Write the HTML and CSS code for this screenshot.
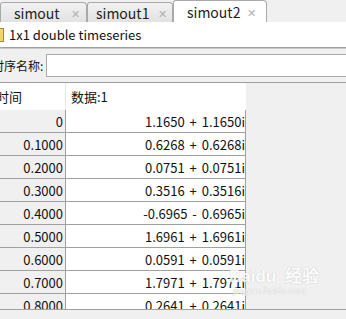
FILE: index.html
```html
<!DOCTYPE html>
<html lang="zh-CN">
<head>
  <meta charset="UTF-8" />
  <title>simout2</title>
  <link rel="stylesheet" href="styles.css">
</head>
<body>
  <div class="tabs">
    <div class="tab tab-1"><span>simout</span><span class="close">&#x2715;</span></div>
    <div class="tab tab-2"><span>simout1</span><span class="close">&#x2715;</span></div>
    <div class="tab tab-3 active"><span>simout2</span><span class="close">&#x2715;</span></div>
  </div>

  <div class="info">
    <span class="var-icon"></span>
    <span>1x1 double timeseries</span>
  </div>

  <div class="name-row">
    <span class="name-label">时序名称:</span>
    <input class="name-input" type="text">
  </div>

  <div class="panel">
    <div class="grid">
      <div class="head head-time">时间</div>
      <div class="head head-data">数据:1</div>

      <div class="cell time">0</div><div class="cell data">1.1650 + 1.1650i</div>
      <div class="cell time">0.1000</div><div class="cell data">0.6268 + 0.6268i</div>
      <div class="cell time">0.2000</div><div class="cell data">0.0751 + 0.0751i</div>
      <div class="cell time">0.3000</div><div class="cell data">0.3516 + 0.3516i</div>
      <div class="cell time">0.4000</div><div class="cell data">-0.6965 - 0.6965i</div>
      <div class="cell time">0.5000</div><div class="cell data">1.6961 + 1.6961i</div>
      <div class="cell time">0.6000</div><div class="cell data">0.0591 + 0.0591i</div>
      <div class="cell time">0.7000</div><div class="cell data">1.7971 + 1.7971i</div>
      <div class="cell time">0.8000</div><div class="cell data">0.2641 + 0.2641i</div>
    </div>
    <div class="watermark">
      <div class="wm-logo">Bai<span class="wm-du">du</span> 经验</div>
      <div class="wm-url">jingyan.baidu.com</div>
    </div>
  </div>
</body>
</html>
```

FILE: styles.css
```css
body {
  margin: 0;
  background: #f0f0f0;
  font-family: "Noto Sans CJK SC", "Open Sans", sans-serif;
  font-size: 13px;
  color: #111;
  width: 346px;
  height: 319px;
  overflow: hidden;
}
.tabs {
  display: flex;
  align-items: flex-end;
  height: 22px;
  background: #f0f0f0;
}
.tab {
  display: flex;
  align-items: center;
  box-sizing: border-box;
  height: 20px;
  border: 1px solid #a9a9a9;
  border-bottom: none;
  border-radius: 3px 4px 0 0;
  background: linear-gradient(#f2f2f2, #e2e2e2);
  font-size: 14px;
  color: #222;
}
.tab .close {
  margin-left: auto;
  font-size: 11px;
  color: #b0b0b0;
}
.tab-1 {
  width: 87px;
  padding: 0 6px 0 13px;
}
.tab-2 {
  width: 86px;
  padding: 0 5px 0 8px;
}
.tab-3 {
  width: 94px;
  padding: 0 10px 0 13px;
}
.tab.active {
  height: 22px;
  background: #fff;
}
.info {
  display: flex;
  align-items: center;
  gap: 5px;
  height: 25px;
  background: #fff;
  border-bottom: 1px solid #a0a0a0;
  box-shadow: 0 1px 0 #c8c8c8;
}
.var-icon {
  width: 3px;
  height: 12px;
  border: 1px solid #a08a40;
  border-left: none;
  background: #f3d66a;
}
.name-row {
  display: flex;
  align-items: center;
  height: 33px;
  margin-top: 1px;
  white-space: nowrap;
}
.name-label {
  flex: none;
  width: 54px;
  margin-left: -8px;
  font-size: 12px;
}
.name-input {
  flex: none;
  box-sizing: border-box;
  width: 300px;
  height: 23px;
  margin: 0;
  border: 1px solid #ababab;
  border-right: none;
  background: #fff;
}
.panel {
  position: relative;
  height: 226px;
  border-top: 1px solid #a0a0a0;
  border-bottom: 1px solid #a0a0a0;
  overflow: hidden;
}
.grid {
  display: grid;
  grid-template-columns: 66px 180px;
  grid-auto-rows: 23px;
  grid-template-rows: 27px;
}
.head {
  display: flex;
  align-items: center;
  background: #fff;
}
.head-time {
  text-indent: -4px;
  border-right: 1px solid #e6e6e6;
}
.head-data {
  padding-left: 5px;
}
.cell {
  display: flex;
  align-items: center;
  justify-content: flex-end;
  border-bottom: 1px solid #a0a0a0;
  white-space: pre;
}
.time {
  padding-right: 2px;
  border-right: 1px solid #a0a0a0;
  background: #f0f0f0;
}
.data {
  background: #fff;
  border-right: 1px solid #a0a0a0;
  word-spacing: 2px;
}
.watermark {
  position: absolute;
  left: 229px;
  top: 186px;
  color: #fff;
  white-space: nowrap;
  text-shadow: 0 0 1px #c4c4c4, 0 0 1px #c4c4c4;
  opacity: 0.8;
}
.wm-logo {
  font-family: "Liberation Sans", sans-serif;
  font-size: 17px;
  font-weight: bold;
  line-height: 16px;
}
.wm-du {
  margin-right: 4px;
}
.wm-url {
  margin-left: 4px;
  font-family: "Liberation Sans", sans-serif;
  font-size: 9px;
  line-height: 12px;
}
```
